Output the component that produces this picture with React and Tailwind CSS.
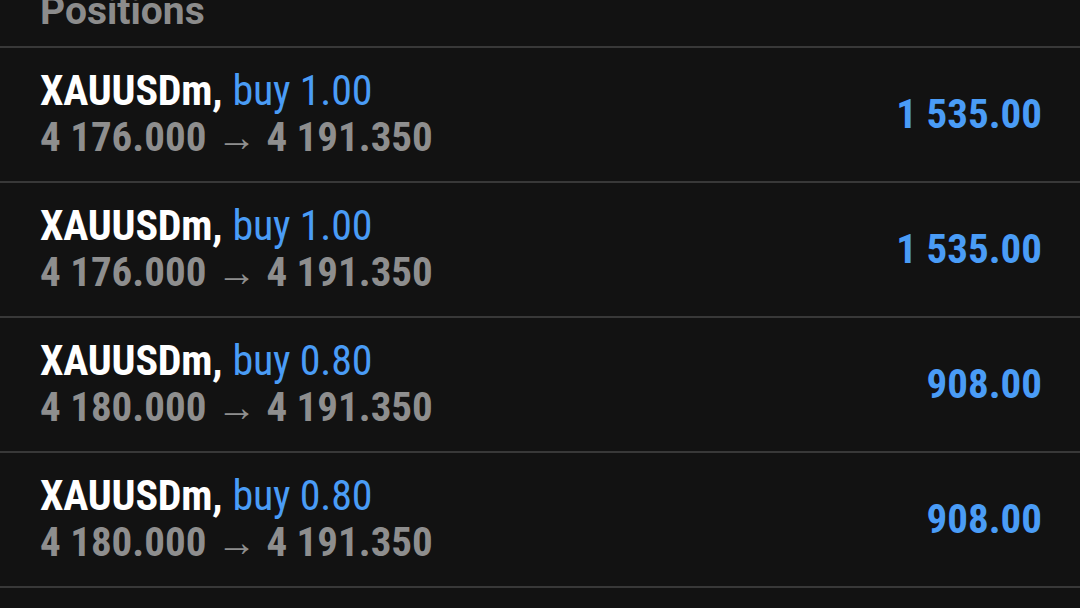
const positions = [
  { symbol: 'XAUUSDm', side: 'buy', volume: '1.00', open: '4 176.000', price: '4 191.350', profit: '1 535.00' },
  { symbol: 'XAUUSDm', side: 'buy', volume: '1.00', open: '4 176.000', price: '4 191.350', profit: '1 535.00' },
  { symbol: 'XAUUSDm', side: 'buy', volume: '0.80', open: '4 180.000', price: '4 191.350', profit: '908.00' },
  { symbol: 'XAUUSDm', side: 'buy', volume: '0.80', open: '4 180.000', price: '4 191.350', profit: '908.00' },
];

export default function App() {
  return (
    <div className="bg-[#121212] min-h-screen h-[608px] overflow-hidden" style={{ fontFamily: '"Roboto Condensed", Roboto, sans-serif' }}>
      <div className="h-[46px] flex items-end px-[40px] overflow-hidden">
        <h2 className="text-[39px] font-bold text-[#8c8c8c] leading-none mb-[15px]" style={{ fontFamily: 'Roboto, sans-serif' }}>Positions</h2>
      </div>
      {positions.map((p, i) => (
        <div key={i} className="h-[135px] border-t-2 border-[#383838] flex items-center justify-between pl-[40px] pr-[38px]">
          <div className="flex flex-col">
            <div className="text-[42px] leading-[46px] font-bold text-white tracking-[-0.2px]">
              {p.symbol},<span className="font-normal text-[#4a9cf6] ml-[10px]">{p.side} {p.volume}</span>
            </div>
            <div className="text-[41px] leading-[46px] font-bold text-[#8e8e8e] flex items-baseline">
              <span>{p.open}</span>
              <span className="font-light text-[40px] mx-[10px]">→</span>
              <span>{p.price}</span>
            </div>
          </div>
          <div className="text-[41px] font-bold text-[#4a9cf6]">{p.profit}</div>
        </div>
      ))}
      <div className="border-t-2 border-[#383838]" />
    </div>
  );
}
